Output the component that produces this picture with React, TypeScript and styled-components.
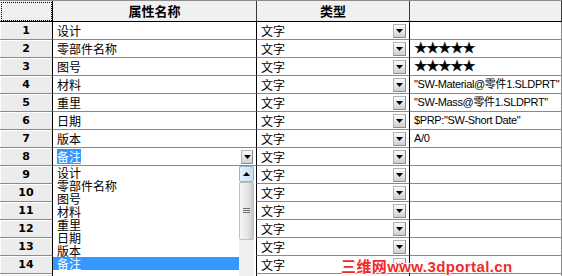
import styled, { createGlobalStyle, css } from "styled-components";

const rows = [
  { name: "设计", value: "" },
  { name: "零部件名称", value: "★★★★★", stars: true },
  { name: "图号", value: "★★★★★", stars: true },
  { name: "材料", value: "\"SW-Material@零件1.SLDPRT\"" },
  { name: "重里", value: "\"SW-Mass@零件1.SLDPRT\"" },
  { name: "日期", value: "$PRP:\"SW-Short Date\"" },
  { name: "版本", value: "A/0" },
  { name: "备注", value: "", editing: true },
  { name: "", value: "" },
  { name: "", value: "" },
  { name: "", value: "" },
  { name: "", value: "" },
  { name: "", value: "" },
  { name: "", value: "" },
  { name: "", value: "" },
];

const options = ["设计", "零部件名称", "图号", "材料", "重里", "日期", "版本", "备注"];

const GlobalStyle = createGlobalStyle`
  body {
    margin: 0;
    background: #fff;
    font-family: "Noto Sans CJK SC", "Liberation Sans", sans-serif;
  }
`;

const Sheet = styled.div`
  position: relative;
  width: 562px;
  height: 276px;
  overflow: hidden;
  background: #fff;
  border-top: 1px solid #8c8c8c;
  box-sizing: border-box;
`;

const gridCols = css`
  display: grid;
  grid-template-columns: 53px 204px 153px 152px;
`;

const HeaderRow = styled.div`
  ${gridCols};
  height: 21px;
`;

const HeaderCell = styled.div<{ $corner?: boolean }>`
  box-sizing: border-box;
  background: #f0f0f0;
  border-right: 1px solid ${({ $corner }) => ($corner ? "#000" : "#3c3c3c")};
  border-bottom: 1px solid #000;
  font-size: 13px;
  font-weight: 700;
  line-height: 20px;
  text-align: center;
  color: #000;
  ${({ $corner }) =>
    $corner &&
    css`
      outline: 1px dotted #000;
      outline-offset: -2px;
    `}
`;

const Row = styled.div`
  ${gridCols};
  height: 18px;
`;

const RowHead = styled.div`
  box-sizing: border-box;
  background: #ececec;
  border-right: 1px solid #000;
  border-bottom: 1px solid #8a8a8a;
  box-shadow: inset 1px 1px 0 #fff;
  font-family: "DejaVu Sans", Arial, sans-serif;
  font-weight: 700;
  font-size: 11px;
  line-height: 17px;
  text-align: center;
  color: #000;
`;

const Cell = styled.div<{ $last?: boolean }>`
  box-sizing: border-box;
  border-right: 1px solid ${({ $last }) => ($last ? "#8a8a8a" : "#000")};
  border-bottom: 1px solid #8a8a8a;
  font-size: 12px;
  line-height: 17px;
  color: #000;
  white-space: nowrap;
  overflow: hidden;
`;

const NameCell = styled(Cell)`
  padding-left: 4px;
`;

const EditCell = styled(Cell)`
  display: flex;
  align-items: center;
  justify-content: space-between;
  padding: 0 3px 0 4px;
`;

const Selected = styled.span`
  background: #3399ff;
  color: #fff;
  line-height: 15px;
`;

const TypeCell = styled(Cell)`
  display: flex;
  align-items: center;
  justify-content: space-between;
  padding: 0 3px 0 4px;
`;

const ValueCell = styled(Cell)<{ $stars?: boolean }>`
  padding-left: 4px;
  font-family: "Liberation Sans", "Noto Sans CJK SC", sans-serif;
  font-size: 11px;
  letter-spacing: -0.35px;
  ${({ $stars }) =>
    $stars &&
    css`
      font-family: "DejaVu Sans", sans-serif;
      font-size: 15px;
      font-weight: 700;
      letter-spacing: -1.4px;
      -webkit-text-stroke: 0.4px #000;
    `}
`;

const DropButton = styled.div<{ $w?: number }>`
  box-sizing: border-box;
  width: ${({ $w }) => $w ?? 13}px;
  height: 14px;
  display: flex;
  align-items: center;
  justify-content: center;
  background: linear-gradient(#fafafa, #e2e2e2 60%, #cfcfcf);
  border: 1px solid #b4b4b4;
  border-right-color: #8a8a8a;
  border-bottom-color: #8a8a8a;
`;

const DropList = styled.div`
  position: absolute;
  left: 53px;
  top: 165px;
  width: 203px;
  height: 120px;
  background: #fff;
  display: grid;
  grid-template-columns: 186px 15px 2px;
`;

const Options = styled.div`
  display: flex;
  flex-direction: column;
`;

const Option = styled.div<{ $active?: boolean }>`
  height: 13px;
  line-height: 13px;
  font-size: 12px;
  padding-left: 4px;
  color: ${({ $active }) => ($active ? "#fff" : "#000")};
  background: ${({ $active }) => ($active ? "#3399ff" : "transparent")};
`;

const Scrollbar = styled.div`
  display: flex;
  flex-direction: column;
  background: #f0f0ee;
`;

const ScrollUp = styled.div`
  box-sizing: border-box;
  height: 16px;
  display: flex;
  align-items: center;
  justify-content: center;
  background: linear-gradient(90deg, #e8f2fd, #c6dcf5);
  border: 1px solid #8fb2dc;
  border-radius: 2px;
`;

const Thumb = styled.div`
  box-sizing: border-box;
  height: 58px;
  display: flex;
  align-items: center;
  justify-content: center;
  background: linear-gradient(90deg, #f6f6f6, #e4e4e4 60%, #c8c8c8);
  border: 1px solid #c0c0c0;
  border-radius: 2px;
`;

const Watermark = styled.div`
  position: absolute;
  left: 341px;
  top: 254px;
  font-family: "Liberation Sans", "Noto Sans CJK SC", sans-serif;
  font-size: 15px;
  font-weight: 700;
  color: #ee2b2b;
  letter-spacing: 0.4px;
  text-shadow: 1px 0 0 #fff, -1px 0 0 #fff, 0 1px 0 #fff, 0 -1px 0 #fff,
    1px 1px 0 #f5b8b8;
`;

function Arrow({ up }: { up?: boolean }) {
  return (
    <svg width="7" height="4" viewBox="0 0 7 4">
      <path d={up ? "M0 4 L3.5 0 L7 4 Z" : "M0 0 L7 0 L3.5 4 Z"} fill="#000" />
    </svg>
  );
}

function Grip() {
  return (
    <svg width="7" height="6" viewBox="0 0 7 6">
      <path d="M0 0.5H7M0 2.5H7M0 4.5H7" stroke="#6f6f6f" strokeWidth="1" />
    </svg>
  );
}

export default function App() {
  return (
    <>
      <GlobalStyle />
      <Sheet>
        <HeaderRow>
          <HeaderCell $corner />
          <HeaderCell>属性名称</HeaderCell>
          <HeaderCell>类型</HeaderCell>
          <HeaderCell />
        </HeaderRow>
        {rows.map((r, i) => (
          <Row key={i}>
            <RowHead>{i < 14 ? i + 1 : ""}</RowHead>
            {r.editing ? (
              <EditCell>
                <Selected>{r.name}</Selected>
                <DropButton $w={12}>
                  <Arrow />
                </DropButton>
              </EditCell>
            ) : (
              <NameCell>{r.name}</NameCell>
            )}
            <TypeCell>
              <span>文字</span>
              <DropButton>
                <Arrow />
              </DropButton>
            </TypeCell>
            <ValueCell $last $stars={r.stars}>
              {r.value}
            </ValueCell>
          </Row>
        ))}
        <DropList>
          <Options>
            {options.map((o, i) => (
              <Option key={o} $active={i === options.length - 1}>
                {o}
              </Option>
            ))}
          </Options>
          <Scrollbar>
            <ScrollUp>
              <Arrow up />
            </ScrollUp>
            <Thumb>
              <Grip />
            </Thumb>
          </Scrollbar>
          <div />
        </DropList>
        <Watermark>三维网www.3dportal.cn</Watermark>
      </Sheet>
    </>
  );
}
